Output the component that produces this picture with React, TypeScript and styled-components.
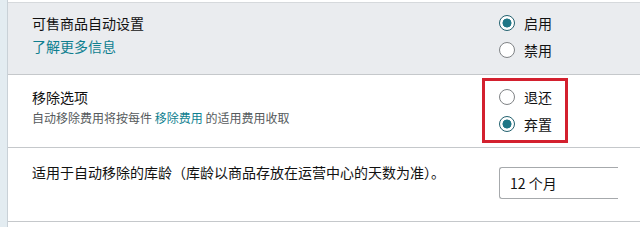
import React from "react";
import styled, { createGlobalStyle } from "styled-components";

const GlobalStyle = createGlobalStyle`
  html, body {
    margin: 0;
    padding: 0;
    background: #ffffff;
  }
  body {
    font-family: "Noto Sans CJK SC", "Noto Sans", "Liberation Sans", sans-serif;
    color: #0f1111;
  }
`;

const Page = styled.div`
  display: flex;
  width: 640px;
  height: 227px;
  overflow: hidden;
  background: #ffffff;
`;

const Rail = styled.div`
  width: 7px;
  flex-shrink: 0;
  background: #e3ecf1;
  border-right: 1px solid #c9d1d7;
`;

const Panel = styled.div`
  flex: 1;
  display: flex;
  flex-direction: column;
  padding-top: 2px;
`;

const Row = styled.div<{ $shaded?: boolean; $height: number }>`
  display: flex;
  height: ${(p) => p.$height}px;
  background: ${(p) => (p.$shaded ? "#eaecef" : "#ffffff")};
  border-top: ${(p) => (p.$shaded ? "1px solid #d6d9dc" : "none")};
  border-bottom: 1px solid #c5c8cb;
  box-sizing: border-box;
`;

const Label = styled.div<{ $top: number }>`
  flex: 1;
  padding: ${(p) => p.$top}px 0 0 24px;
`;

const Title = styled.div`
  font-size: 14px;
  line-height: 20px;
  color: #111111;
`;

const Link = styled.a`
  color: #0f7f8f;
  text-decoration: none;
  font-size: 14px;
  line-height: 20px;
`;

const Hint = styled.div`
  margin-top: 2px;
  font-size: 12px;
  line-height: 18px;
  color: #555a5c;
  & a {
    font-size: 12px;
    line-height: 18px;
  }
`;

const Side = styled.div<{ $top: number }>`
  width: 158px;
  flex-shrink: 0;
  padding-top: ${(p) => p.$top}px;
  box-sizing: border-box;
`;

const RadioGroup = styled.div`
  padding-left: 17px;
`;

const Highlight = styled.div`
  width: 86px;
  box-sizing: border-box;
  border: 3px solid #d3202e;
  padding: 2px 0 3px 14px;
`;

const Option = styled.label`
  display: flex;
  align-items: center;
  gap: 9px;
  height: 27px;
  font-size: 14px;
  color: #111111;
`;

const Dot = styled.span<{ $checked?: boolean }>`
  width: 16px;
  height: 16px;
  box-sizing: border-box;
  border-radius: 50%;
  flex-shrink: 0;
  background: ${(p) =>
    p.$checked
      ? "radial-gradient(circle, #1f7686 0 4.2px, #ffffff 4.8px)"
      : "#ffffff"};
  border: ${(p) => (p.$checked ? "1.5px solid #23616f" : "1px solid #808386")};
`;

const Select = styled.div`
  margin: 19px 0 0 17px;
  width: 119px;
  height: 32px;
  box-sizing: border-box;
  border: 1px solid #a6a9ac;
  border-right: none;
  border-radius: 3px 0 0 3px;
  padding-left: 10px;
  display: flex;
  align-items: center;
  font-size: 14px;
  color: #111111;
`;

type Choice = { text: string; checked?: boolean };

const Radios = ({ items }: { items: Choice[] }) => (
  <>
    {items.map((c) => (
      <Option key={c.text}>
        <Dot $checked={c.checked} />
        {c.text}
      </Option>
    ))}
  </>
);

const App = () => {
  return (
    <>
      <GlobalStyle />
      <Page>
        <Rail />
        <Panel>
          <Row $shaded $height={73}>
            <Label $top={10}>
              <Title>可售商品自动设置</Title>
              <Link href="#">了解更多信息</Link>
            </Label>
            <Side $top={6}>
              <RadioGroup>
                <Radios
                  items={[{ text: "启用", checked: true }, { text: "禁用" }]}
                />
              </RadioGroup>
            </Side>
          </Row>
          <Row $height={73}>
            <Label $top={12}>
              <Title>移除选项</Title>
              <Hint>
                自动移除费用将按每件 <Link href="#">移除费用</Link> 的适用费用收取
              </Hint>
            </Label>
            <Side $top={3}>
              <Highlight>
                <Radios
                  items={[{ text: "退还" }, { text: "弃置", checked: true }]}
                />
              </Highlight>
            </Side>
          </Row>
          <Row $height={74}>
            <Label $top={14}>
              <Title>适用于自动移除的库龄（库龄以商品存放在运营中心的天数为准）。</Title>
            </Label>
            <Side $top={0}>
              <Select>12 个月</Select>
            </Side>
          </Row>
        </Panel>
      </Page>
    </>
  );
};

export default App;
